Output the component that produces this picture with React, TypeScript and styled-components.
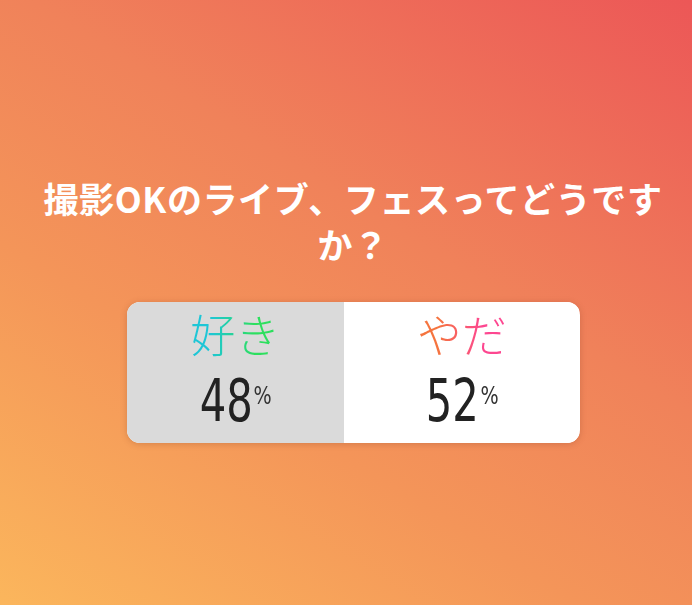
import styled, { createGlobalStyle } from "styled-components";

const GlobalStyle = createGlobalStyle`
  html, body {
    margin: 0;
    padding: 0;
  }
  body {
    font-family: "Noto Sans CJK JP", "Noto Sans", sans-serif;
  }
`;

type Option = {
  label: string;
  percent: number;
  from: string;
  to: string;
  chosen?: boolean;
};

const options: Option[] = [
  { label: "好き", percent: 48, from: "#1ec6d6", to: "#2ddf5e", chosen: true },
  { label: "やだ", percent: 52, from: "#f5743e", to: "#fd4790" },
];

function App() {
  return (
    <Page>
      <GlobalStyle />
      <Question>撮影OKのライブ、フェスってどうですか？</Question>
      <Poll>
        {options.map((o) => (
          <Choice key={o.label} $chosen={o.chosen} style={{ width: `${o.percent}%` }}>
            <Label $from={o.from} $to={o.to}>{o.label}</Label>
            <Result>
              <Digits>{o.percent}</Digits>
              <Sign>%</Sign>
            </Result>
          </Choice>
        ))}
      </Poll>
    </Page>
  );
}

const Page = styled.main`
  width: 692px;
  height: 605px;
  box-sizing: border-box;
  padding: 175px 0 0 14px;
  display: flex;
  flex-direction: column;
  align-items: center;
  background: linear-gradient(32deg, #fbb65c 0%, #f49559 35%, #f0825a 60%, #ec5757 100%);
  overflow: hidden;
`;

const Question = styled.h1`
  margin: 0;
  width: 650px;
  text-align: center;
  color: #fff;
  font-size: 35px;
  font-weight: 700;
  line-height: 46px;
  letter-spacing: 0.6px;
`;

const Poll = styled.section`
  margin-top: 35px;
  width: 453px;
  height: 141px;
  display: flex;
  border-radius: 13px;
  overflow: hidden;
  background: #fff;
  box-shadow: 0 1px 6px rgba(120, 50, 30, 0.25);
`;

const Choice = styled.div<{ $chosen?: boolean }>`
  display: flex;
  flex-direction: column;
  align-items: center;
  background: ${(p) => (p.$chosen ? "#dadada" : "#ffffff")};
`;

const Label = styled.div<{ $from: string; $to: string }>`
  padding: 1px 4px 0;
  font-size: 45px;
  font-weight: 300;
  line-height: 62px;
  background: linear-gradient(90deg, ${(p) => p.$from} 25%, ${(p) => p.$to} 70%);
  -webkit-background-clip: text;
  background-clip: text;
  color: transparent;
`;

const Result = styled.div`
  display: flex;
  align-items: flex-start;
  margin-top: 6px;
  margin-left: 2px;
  color: #222;
`;

const Digits = styled.span`
  font-family: "DejaVu Sans Condensed", "DejaVu Sans", sans-serif;
  font-stretch: condensed;
  font-size: 58px;
  line-height: 60px;
  font-weight: 400;
  display: inline-block;
  transform: scaleX(0.8);
  margin: 0 -7px 0 -6px;
`;

const Sign = styled.span`
  font-family: "DejaVu Sans Condensed", "DejaVu Sans", sans-serif;
  font-stretch: condensed;
  font-size: 25px;
  line-height: 25px;
  margin-top: 12px;
  color: #333;
  display: inline-block;
  transform: scaleX(0.85);
`;

export default App;
